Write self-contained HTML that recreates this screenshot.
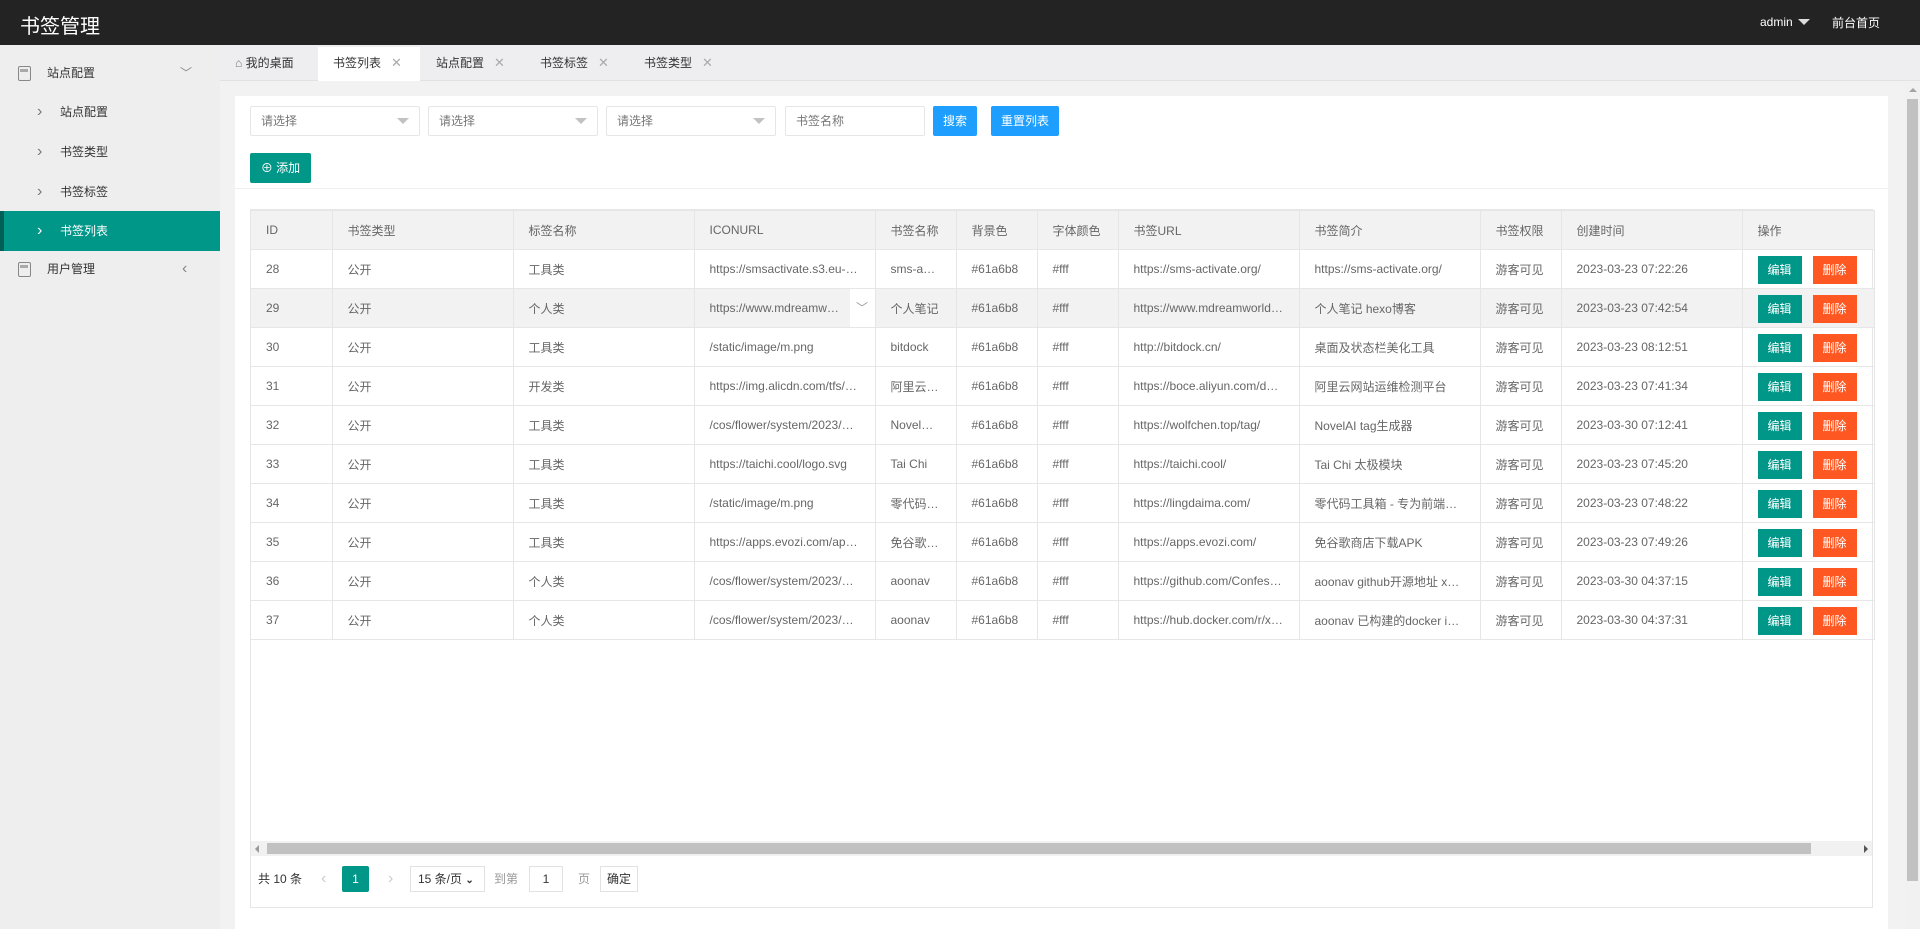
<!DOCTYPE html>
<html style="width:1920px;height:929px;overflow:hidden"><head><meta charset="utf-8"><style>
*{margin:0;padding:0;box-sizing:border-box}
body{width:1920px;height:929px;overflow:hidden;background:#f2f2f2;font-family:"Liberation Sans","Noto Sans CJK SC",sans-serif;font-size:12px;color:#666;position:relative}
.hd{position:absolute;left:0;top:0;width:1920px;height:45px;background:#232323;color:#fff}
.hd .t{position:absolute;left:20px;top:10px;font-size:20px}
.hd .a{position:absolute;left:1760px;top:15px;font-size:12px}
.hd .tri{position:absolute;left:1798px;top:19px;border:6px solid transparent;border-top:6px solid #ddd;border-bottom:0}
.hd .f{position:absolute;left:1832px;top:14px;font-size:12px}
.sb{position:absolute;left:0;top:45px;width:220px;height:884px;background:#eee}
.it{position:absolute;left:0;width:220px;height:40px;line-height:40px;color:#333}
.it .tx{position:absolute;left:60px}
.it .ch{position:absolute;left:37px;top:0;color:#777;font-size:16px}
.it.top .tx{left:47px}
.it.act{background:#009688;color:#fff;border-left:4px solid #005f56}
.it.act .tx{left:56px}.it.act .ch{left:33px;color:#fff}
.ico{position:absolute;left:18px;top:13px;width:13px;height:15px;border:1.5px solid #888;border-radius:2px}
.ico:after{content:"";position:absolute;left:1px;top:2px;width:8px;height:3px;background:#aaa}
.tabs{position:absolute;left:220px;top:45px;width:1700px;height:36px;background:#eeeef0;border-bottom:1px solid #e2e2e2}
.tab{position:absolute;top:2px;height:34px;line-height:32px;color:#333;font-size:12px}
.tab .x{color:#aaa;margin-left:10px;font-size:13px}
.tab.on{background:#fff}
.card{position:absolute;left:235px;top:96px;width:1653px;height:833px;background:#fff}
.sel{position:absolute;top:10px;height:30px;border:1px solid #e6e6e6;border-radius:2px;line-height:28px;padding-left:10px;color:#777}
.sel i{position:absolute;right:10px;top:11px;border:6px solid transparent;border-top:6px solid #c2c2c2;border-bottom:0}
.btn{position:absolute;height:30px;line-height:30px;color:#fff;text-align:center;border-radius:2px}
.tw{position:absolute;left:15px;top:113px;width:1623px;height:699px;border:1px solid #e6e6e6}
table{border-collapse:collapse;table-layout:fixed;width:1623px}
td,th{border:1px solid #e6e6e6;height:39px;padding:0 15px;white-space:nowrap;overflow:hidden;text-overflow:ellipsis;text-align:left;font-weight:normal;color:#666}
th{background:#f2f2f2}
tr td:first-child,tr th:first-child{border-left:0}
tr.hv td{background:#f2f2f2}
.e,.d{display:inline-block;width:44px;height:28px;line-height:28px;text-align:center;color:#fff;margin-top:1px}
.e{background:#009688}.d{background:#FF5722;margin-left:11px}
.op{padding-left:15px}
.pg{position:absolute;top:656px;height:26px;line-height:26px}
</style></head><body>
<div class="hd"><div class="t">书签管理</div><div class="a">admin</div><div class="tri"></div><div class="f">前台首页</div></div>
<div class="sb">
<div class="it top" style="top:8px"><div class="ico"></div><span class="tx">站点配置</span><span style="position:absolute;left:180px;color:#888">﹀</span></div>
<div class="it" style="top:47px"><span class="ch">›</span><span class="tx">站点配置</span></div>
<div class="it" style="top:87px"><span class="ch">›</span><span class="tx">书签类型</span></div>
<div class="it" style="top:127px"><span class="ch">›</span><span class="tx">书签标签</span></div>
<div class="it act" style="top:166px"><span class="ch">›</span><span class="tx">书签列表</span></div>
<div class="it top" style="top:204px"><div class="ico"></div><span class="tx">用户管理</span><span style="position:absolute;left:182px;color:#888;font-size:16px">‹</span></div>
</div>
<div class="tabs">
<div class="tab" style="left:15px"><span style="color:#777">⌂</span> 我的桌面</div>
<div class="tab on" style="left:98px;width:102px;padding-left:15px">书签列表<span class="x">✕</span></div>
<div class="tab" style="left:216px">站点配置<span class="x">✕</span></div>
<div class="tab" style="left:320px">书签标签<span class="x">✕</span></div>
<div class="tab" style="left:424px">书签类型<span class="x">✕</span></div>
</div>
<div class="card">
<div class="sel" style="left:15px;width:170px">请选择<i></i></div>
<div class="sel" style="left:193px;width:170px">请选择<i></i></div>
<div class="sel" style="left:371px;width:170px">请选择<i></i></div>
<div class="sel" style="left:550px;width:140px">书签名称</div>
<div class="btn" style="left:698px;top:10px;width:44px;background:#1E9FFF">搜索</div>
<div class="btn" style="left:756px;top:10px;width:68px;background:#1E9FFF">重置列表</div>
<div class="btn" style="left:15px;top:57px;width:61px;background:#009688">⊕ 添加</div>
<div style="position:absolute;left:0;top:92px;width:1653px;height:1px;background:#f0f0f0"></div>
<div class="tw"><table>
<colgroup><col style="width:81px"><col style="width:181px"><col style="width:181px"><col style="width:181px"><col style="width:81px"><col style="width:81px"><col style="width:81px"><col style="width:181px"><col style="width:181px"><col style="width:81px"><col style="width:181px"><col style="width:132px"></colgroup>
<tr><th>ID</th><th>书签类型</th><th>标签名称</th><th>ICONURL</th><th>书签名称</th><th>背景色</th><th>字体颜色</th><th>书签URL</th><th>书签简介</th><th>书签权限</th><th>创建时间</th><th>操作</th></tr>
<tr><td>28</td><td>公开</td><td>工具类</td><td>https://smsactivate.s3.eu-central-1.amazonaws.com</td><td>sms-activate</td><td>#61a6b8</td><td>#fff</td><td>https://sms-activate.org/</td><td>https://sms-activate.org/</td><td>游客可见</td><td>2023-03-23 07:22:26</td><td class="op"><span class="e">编辑</span><span class="d">删除</span></td></tr>
<tr class="hv"><td>29</td><td>公开</td><td>个人类</td><td style="position:relative;padding-right:30px">https://www.mdreamworld.cn/x<span style="position:absolute;right:0;top:0;width:25px;height:38px;background:#fff;color:#999;text-align:center;line-height:38px">﹀</span></td><td>个人笔记</td><td>#61a6b8</td><td>#fff</td><td>https://www.mdreamworld.cn/</td><td>个人笔记 hexo博客</td><td>游客可见</td><td>2023-03-23 07:42:54</td><td class="op"><span class="e">编辑</span><span class="d">删除</span></td></tr>
<tr><td>30</td><td>公开</td><td>工具类</td><td>/static/image/m.png</td><td>bitdock</td><td>#61a6b8</td><td>#fff</td><td>http://bitdock.cn/</td><td>桌面及状态栏美化工具</td><td>游客可见</td><td>2023-03-23 08:12:51</td><td class="op"><span class="e">编辑</span><span class="d">删除</span></td></tr>
<tr><td>31</td><td>公开</td><td>开发类</td><td>https://img.alicdn.com/tfs/xxxx</td><td>阿里云网站</td><td>#61a6b8</td><td>#fff</td><td>https://boce.aliyun.com/detect</td><td>阿里云网站运维检测平台</td><td>游客可见</td><td>2023-03-23 07:41:34</td><td class="op"><span class="e">编辑</span><span class="d">删除</span></td></tr>
<tr><td>32</td><td>公开</td><td>工具类</td><td>/cos/flower/system/2023/xxxx</td><td>NovelAI tag</td><td>#61a6b8</td><td>#fff</td><td>https://wolfchen.top/tag/</td><td>NovelAI tag生成器</td><td>游客可见</td><td>2023-03-30 07:12:41</td><td class="op"><span class="e">编辑</span><span class="d">删除</span></td></tr>
<tr><td>33</td><td>公开</td><td>工具类</td><td>https://taichi.cool/logo.svg</td><td>Tai Chi</td><td>#61a6b8</td><td>#fff</td><td>https://taichi.cool/</td><td>Tai Chi 太极模块</td><td>游客可见</td><td>2023-03-23 07:45:20</td><td class="op"><span class="e">编辑</span><span class="d">删除</span></td></tr>
<tr><td>34</td><td>公开</td><td>工具类</td><td>/static/image/m.png</td><td>零代码工具</td><td>#61a6b8</td><td>#fff</td><td>https://lingdaima.com/</td><td>零代码工具箱 - 专为前端开发</td><td>游客可见</td><td>2023-03-23 07:48:22</td><td class="op"><span class="e">编辑</span><span class="d">删除</span></td></tr>
<tr><td>35</td><td>公开</td><td>工具类</td><td>https://apps.evozi.com/apk-downloader</td><td>免谷歌商店</td><td>#61a6b8</td><td>#fff</td><td>https://apps.evozi.com/</td><td>免谷歌商店下载APK</td><td>游客可见</td><td>2023-03-23 07:49:26</td><td class="op"><span class="e">编辑</span><span class="d">删除</span></td></tr>
<tr><td>36</td><td>公开</td><td>个人类</td><td>/cos/flower/system/2023/xxxx</td><td>aoonav</td><td>#61a6b8</td><td>#fff</td><td>https://github.com/Confession</td><td>aoonav github开源地址 xxxx</td><td>游客可见</td><td>2023-03-30 04:37:15</td><td class="op"><span class="e">编辑</span><span class="d">删除</span></td></tr>
<tr><td>37</td><td>公开</td><td>个人类</td><td>/cos/flower/system/2023/xxxx</td><td>aoonav</td><td>#61a6b8</td><td>#fff</td><td>https://hub.docker.com/r/xxxx</td><td>aoonav 已构建的docker image</td><td>游客可见</td><td>2023-03-30 04:37:31</td><td class="op"><span class="e">编辑</span><span class="d">删除</span></td></tr>
</table>
<div style="position:absolute;left:0;top:631px;width:1621px;height:15px;background:#f1f1f1">
<div style="position:absolute;left:16px;top:2px;width:1544px;height:11px;background:#c1c1c1"></div>
<div style="position:absolute;left:4px;top:4px;border:4px solid transparent;border-right:4px solid #999;border-left:0"></div>
<div style="position:absolute;right:4px;top:4px;border:4px solid transparent;border-left:4px solid #555;border-right:0"></div>
</div>
<div class="pg" style="left:7px;color:#333">共 10 条</div>
<div class="pg" style="left:70px;color:#ccc;font-size:16px">‹</div>
<div class="pg" style="left:91px;width:27px;background:#009688;color:#fff;text-align:center;border-radius:2px">1</div>
<div class="pg" style="left:137px;color:#ccc;font-size:16px">›</div>
<div class="pg" style="left:159px;width:75px;border:1px solid #e2e2e2;color:#333;padding-left:7px;line-height:24px">15 条/页 <b style="font-size:10px">⌄</b></div>
<div class="pg" style="left:243px;color:#999">到第</div>
<div class="pg" style="left:278px;width:34px;border:1px solid #e2e2e2;text-align:center;color:#333;line-height:24px">1</div>
<div class="pg" style="left:327px;color:#999">页</div>
<div class="pg" style="left:349px;width:38px;border:1px solid #e2e2e2;text-align:center;color:#333;line-height:24px">确定</div>
</div>
</div>
<div style="position:absolute;left:1905px;top:81px;width:15px;height:848px;background:#f1f1f1">
<div style="position:absolute;left:4px;top:7px;border:4px solid transparent;border-bottom:4px solid #a3a3a3;border-top:0"></div>
<div style="position:absolute;left:2px;top:18px;width:11px;height:782px;background:#c1c1c1"></div>
</div>
</body></html>
